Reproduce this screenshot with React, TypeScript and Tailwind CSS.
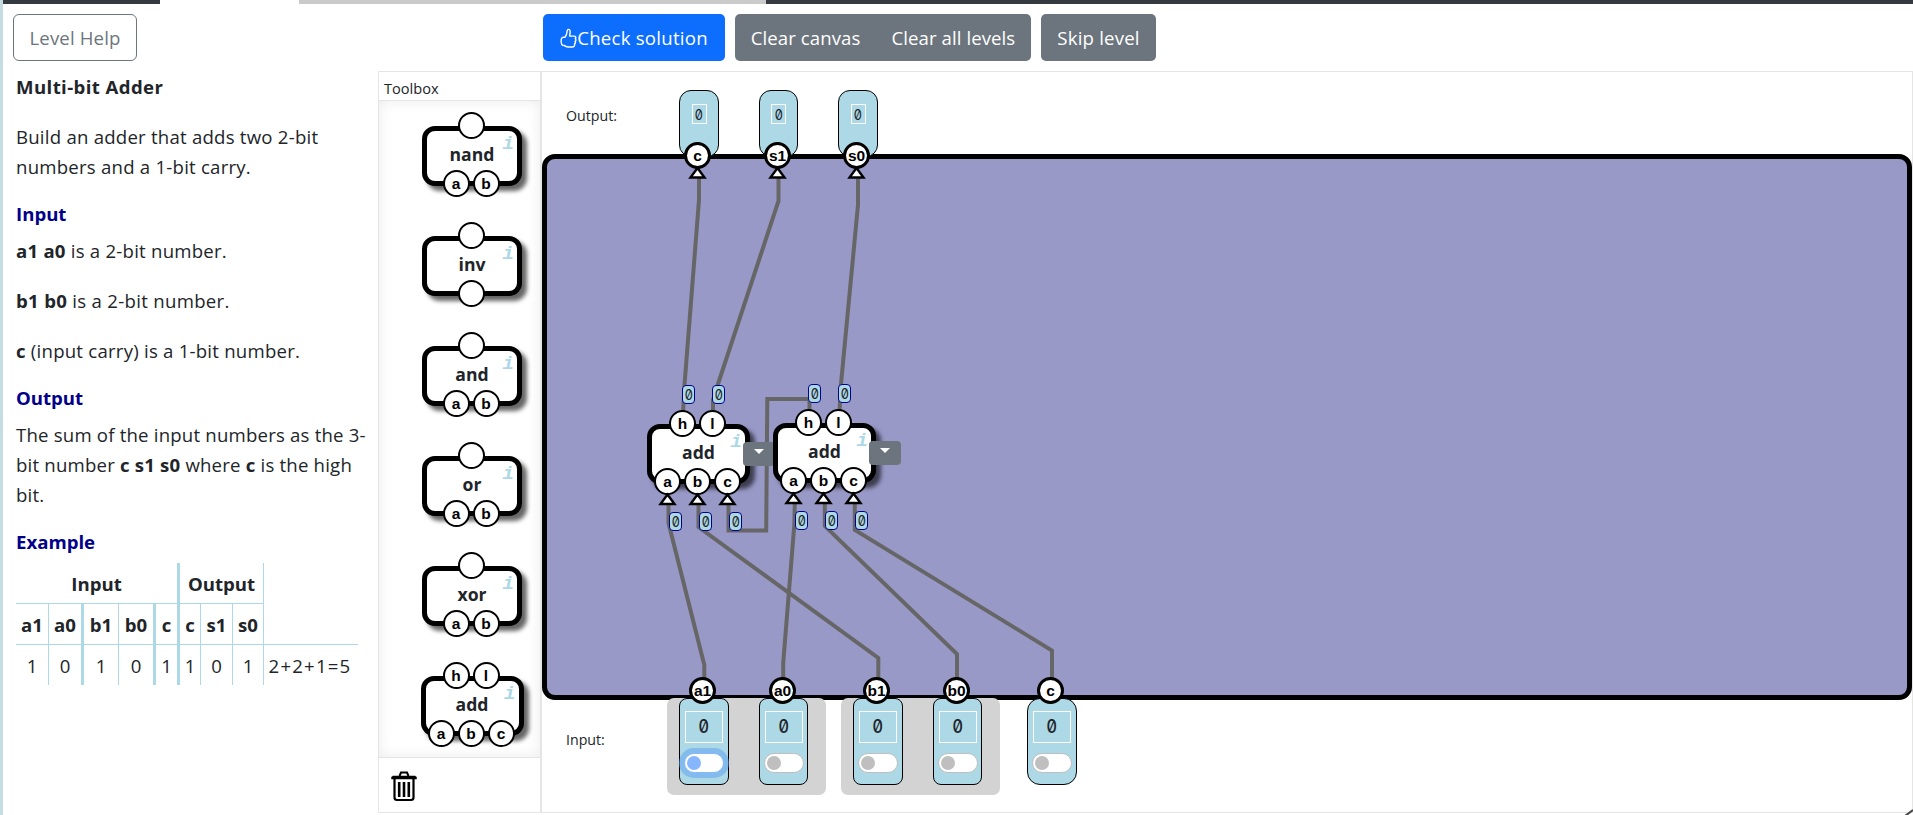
import type { ReactNode } from "react";

type Point = [number, number];

const ORIGIN_X = 541;
const ORIGIN_Y = 71;
const at = (x: number, y: number) => ({ left: x - ORIGIN_X, top: y - ORIGIN_Y });

const toolboxGates = [
  { name: "nand", top: [""], bottom: ["a", "b"] },
  { name: "inv", top: [""], bottom: [""] },
  { name: "and", top: [""], bottom: ["a", "b"] },
  { name: "or", top: [""], bottom: ["a", "b"] },
  { name: "xor", top: [""], bottom: ["a", "b"] },
  { name: "add", top: ["h", "l"], bottom: ["a", "b", "c"] },
];

const wires: Point[][] = [
  [[699, 176], [699, 200], [684.5, 385], [683, 413]],
  [[778.5, 176], [778.5, 201], [718, 384], [713, 400], [713, 413]],
  [[858, 176], [858, 205], [841, 384], [839.5, 411]],
  [[809.5, 412], [809.5, 399], [767.3, 399], [766.2, 530.5], [728.5, 530.5], [728.5, 504]],
  [[668.5, 504], [668.5, 523], [704.3, 665], [704.3, 680]],
  [[698.5, 504], [698.5, 527], [878.3, 658], [878.3, 680]],
  [[794.8, 503], [794.3, 525], [783.2, 663], [783.2, 680]],
  [[824.8, 503], [824.8, 526], [957, 654], [957, 680]],
  [[854.8, 503], [854.8, 530], [1052, 650.5], [1052, 680]],
];

const arrows: Point[] = [
  [697.5, 166.5], [777.5, 166.5], [856.5, 166.5],
  [667.5, 493], [697.5, 493], [727.5, 493],
  [793.5, 492], [823.5, 492], [853.5, 492],
];

const badges: Point[] = [
  [682, 385], [712, 385], [808, 384], [838, 384],
  [669, 512], [699, 512], [729, 512],
  [795, 511], [825, 511], [855, 511],
];

const outputs = [
  { name: "c", x: 679, w: 40, pin: 697.5 },
  { name: "s1", x: 759, w: 39, pin: 777.5 },
  { name: "s0", x: 838, w: 40, pin: 856.5 },
];

const inputs = [
  { name: "a1", x: 679, w: 50, pin: 702.5, focused: true, single: false },
  { name: "a0", x: 759, w: 49, pin: 782.5, focused: false, single: false },
  { name: "b1", x: 853, w: 50, pin: 876.5, focused: false, single: false },
  { name: "b0", x: 933, w: 49, pin: 956.5, focused: false, single: false },
  { name: "c", x: 1027, w: 50, pin: 1050.5, focused: false, single: true },
];

function Zero({ large = false }: { large?: boolean }) {
  return (
    <span
      className={`inline-block font-['Inter',sans-serif] leading-none text-[#212529] [font-feature-settings:'zero'] ${
        large ? "scale-x-[.9] text-[18px] font-medium" : "scale-x-[.86] text-[15px]"
      }`}
    >
      0
    </span>
  );
}

function Pin({ children, heavy = false }: { children?: ReactNode; heavy?: boolean }) {
  return (
    <span
      className={`flex size-[27px] shrink-0 items-center justify-center rounded-full border-black bg-white font-['Liberation_Sans',sans-serif] text-[15.5px] leading-none font-bold text-black ${
        heavy ? "border-[3px]" : "border-[2.5px]"
      }`}
    >
      {children}
    </span>
  );
}

function Gate({ name, top, bottom }: { name: string; top: string[]; bottom: string[] }) {
  return (
    <div
      className={`relative flex h-[60px] items-center justify-center rounded-[13px] border-[5px] border-black bg-white shadow-[5px_5px_4px_rgba(0,0,0,0.6)] ${
        bottom.length > 2 ? "w-[103px]" : "w-[100px]"
      }`}
    >
      <div className="absolute -top-[19px] right-0 left-0 flex justify-center gap-[3px] pr-[2px]">
        {top.map((p, i) => <Pin key={i}>{p}</Pin>)}
      </div>
      <span className="pb-[2px] text-[17.6px] leading-none font-bold text-[#212529]">{name}</span>
      <span className="absolute top-[4px] right-[3px] font-['Liberation_Mono',monospace] text-[19px] leading-none font-bold text-[#add8e6] italic">
        i
      </span>
      <div className="absolute top-[39px] -right-[5px] -left-[5px] flex justify-center gap-[3px] pr-[2px]">
        {bottom.map((p, i) => <Pin key={i}>{p}</Pin>)}
      </div>
    </div>
  );
}

function MenuButton() {
  return (
    <button className="flex h-6 w-8 items-center justify-center rounded-[4px] bg-[#6c757d] pb-[5px]">
      <svg width="10" height="5" viewBox="0 0 10 5"><path d="M0 0h10L5 5z" fill="#fff" /></svg>
    </button>
  );
}

function Toggle({ focused }: { focused: boolean }) {
  return (
    <span
      className={`flex h-5 w-10 items-center rounded-full border bg-white pl-[2px] ${
        focused ? "border-[#86b7fe] shadow-[0_0_0_5px_rgba(96,165,240,0.55)]" : "border-[#bfbfbf]"
      }`}
    >
      <span className={`size-[14px] rounded-full ${focused ? "bg-[#86b7fe]" : "bg-[#bfbfbf]"}`} />
    </span>
  );
}

function ThumbIcon() {
  return (
    <svg className="mt-[1px] h-[21px] w-[17px]" viewBox="0 0 17 21" fill="none" stroke="#fff" strokeWidth="1.4" strokeLinejoin="round">
      <path d="M4.8 9.4 C6.8 7.3 7 5.5 7.2 2.7 C7.3 1 9.8.8 10.1 3 C10.3 5 9.9 6.4 9.6 8.1 H14.3 C16 8.1 16.3 10 15.2 10.7 C16.3 11.3 16.1 13 15 13.4 C15.8 14.3 15.4 15.5 14.5 15.9 C15 17.3 14.3 18.9 12.7 19 H8 C6.3 19 5 18.2 3.9 17.4 H2.8 C.8 16.5.6 11 2 9.7 C2.8 9.1 3.8 9.2 4.8 9.4Z" />
    </svg>
  );
}

function TrashIcon() {
  return (
    <svg width="26" height="31" viewBox="0 0 26 31" fill="none" stroke="#000">
      <path d="M8.5 5 L10 1.5 H16 L17.5 5" strokeWidth="2" />
      <path d="M.5 8 V6.6 Q.5 5 2.5 5 H23.5 Q25.5 5 25.5 6.6 V8Z" fill="#000" strokeWidth=".5" />
      <path d="M3.5 8 V26.5 Q3.5 29 6 29 H20 Q22.5 29 22.5 26.5 V8" strokeWidth="2.2" />
      <path d="M8.2 11v15M13 11v15M17.8 11v15" strokeWidth="2.6" />
    </svg>
  );
}

const rowHead = [
  { t: "a1", b: "1", w: "w-[33px]", c: "border-r" },
  { t: "a0", b: "0", w: "w-[35px]", c: "border-r-[3px]" },
  { t: "b1", b: "1", w: "w-[35px]", c: "border-r" },
  { t: "b0", b: "0", w: "w-[37px]", c: "border-r-[3px]" },
  { t: "c", b: "1", w: "w-[24px]", c: "border-r-[3px]" },
  { t: "c", b: "1", w: "w-[21px]", c: "border-r" },
  { t: "s1", b: "0", w: "w-[32px]", c: "border-r" },
  { t: "s0", b: "1", w: "w-[31px]", c: "border-r" },
];

function LevelHelp() {
  return (
    <section className="w-[375px] shrink-0 pt-[1px] pl-[13px] text-[18.6px] leading-[30px] text-[#212529]">
      <h1 className="mb-5 font-bold tracking-[0.4px]">Multi-bit Adder</h1>
      <p className="mb-[17px] tracking-[0.23px] whitespace-nowrap">
        Build an adder that adds two 2-bit<br />numbers and a 1-bit carry.
      </p>
      <h2 className="mb-[7px] font-bold text-[#00008b]">Input</h2>
      <p className="mb-5 tracking-[0.23px]"><b>a1 a0</b> is a 2-bit number.</p>
      <p className="mb-5 tracking-[0.3px]"><b>b1 b0</b> is a 2-bit number.</p>
      <p className="mb-[17px] tracking-[0.23px]"><b>c</b> (input carry) is a 1-bit number.</p>
      <h2 className="mb-[7px] font-bold text-[#00008b]">Output</h2>
      <p className="mb-[17px] tracking-[0.2px] whitespace-nowrap">
        The sum of the input numbers as the 3-<br />bit number <b>c s1 s0</b> where <b>c</b> is the high<br />bit.
      </p>
      <h2 className="mb-[6px] font-bold text-[#00008b]">Example</h2>
      <table className="w-[342px] table-fixed border-separate border-spacing-0 text-center">
        <colgroup>
          {rowHead.map((r, i) => <col key={i} className={r.w} />)}
          <col className="w-[94px]" />
        </colgroup>
        <tbody>
          <tr className="h-[41px]">
            <th colSpan={5} className="border-r-[3px] border-b border-[#add8e6] p-0 pt-[2px]">Input</th>
            <th colSpan={3} className="border-r border-b border-[#add8e6] p-0 pt-[2px]">Output</th>
            <td />
          </tr>
          <tr className="h-[41px]">
            {rowHead.map((r, i) => <th key={i} className={`${r.c} border-b border-[#add8e6] p-0 pt-[2px]`}>{r.t}</th>)}
            <td className="border-b border-[#add8e6]" />
          </tr>
          <tr className="h-[40px]">
            {rowHead.map((r, i) => <td key={i} className={`${r.c} border-[#add8e6] p-0 pt-[2px]`}>{r.b}</td>)}
            <td className="p-0 pt-[2px] pr-[2px] tracking-[1.2px]">2+2+1=5</td>
          </tr>
        </tbody>
      </table>
    </section>
  );
}

function Toolbox() {
  return (
    <aside className="flex h-[742px] w-[163px] shrink-0 flex-col border border-[#e5e5e5]">
      <h2 className="h-[29px] border-b border-[#e5e5e5] pt-[1px] pl-[5px] text-[14.6px] leading-[31px] text-[#212529]">Toolbox</h2>
      <div className="flex flex-1 flex-col items-center gap-[50px] pt-[25px] pl-[25px] shadow-[inset_0_0_14px_rgba(0,0,0,0.08)] ">
        {toolboxGates.map((g) => <Gate key={g.name} {...g} />)}
      </div>
      <div className="flex h-[55px] items-center border-t border-[#e5e5e5] pt-[2px] pl-[12px]"><TrashIcon /></div>
    </aside>
  );
}

function Diagram() {
  return (
    <div className="absolute inset-0">
      <div className="absolute h-[97px] w-[159px] rounded-[7px] bg-[#d3d3d3]" style={at(667, 698)} />
      <div className="absolute h-[97px] w-[159px] rounded-[7px] bg-[#d3d3d3]" style={at(841, 698)} />
      {outputs.map((o) => (
        <div key={o.name} className="absolute flex h-[67px] justify-center rounded-[12px] border border-black bg-[#add8e6] pt-[13px]" style={{ ...at(o.x, 90), width: o.w }}>
          <span className="flex h-5 w-[15px] items-center justify-center border border-white"><Zero /></span>
        </div>
      ))}
      {inputs.map((n) => (
        <div
          key={n.name}
          className={`absolute flex h-[87px] flex-col items-center border border-black bg-[#add8e6] pt-[12px] ${n.single ? "rounded-[13px]" : "rounded-[8px]"}`}
          style={{ ...at(n.x, 698), width: n.w }}
        >
          <span className="mb-[10px] flex h-8 w-[38px] items-center justify-center border border-white"><Zero large /></span>
          <Toggle focused={n.focused} />
        </div>
      ))}
      <svg className="absolute inset-0" width="1372" height="744" viewBox="541 71 1372 744">
        {wires.map((w, i) => <polyline key={i} points={w.map((p) => p.join(",")).join(" ")} fill="none" stroke="#666" strokeWidth="4" />)}
      </svg>
      <div className="absolute" style={at(647, 424)}><Gate name="add" top={["h", "l"]} bottom={["a", "b", "c"]} /></div>
      <div className="absolute" style={at(743, 442)}><MenuButton /></div>
      <div className="absolute" style={at(773, 423)}><Gate name="add" top={["h", "l"]} bottom={["a", "b", "c"]} /></div>
      <div className="absolute" style={at(869, 441)}><MenuButton /></div>
      {outputs.map((o) => <div key={o.name} className="absolute" style={at(o.pin - 13.5, 142)}><Pin heavy>{o.name}</Pin></div>)}
      {inputs.map((n) => <div key={n.name} className="absolute" style={at(n.pin - 13.5, 677)}><Pin heavy>{n.name}</Pin></div>)}
      <svg className="absolute inset-0" width="1372" height="744" viewBox="541 71 1372 744">
        {arrows.map(([x, y], i) => (
          <path key={i} d={`M${x} ${y + 1.5}L${x + 7} ${y + 11}H${x - 7}Z`} fill="#fff" stroke="#000" strokeWidth="2.4" />
        ))}
        <path d="M1905 816l8-6" stroke="#444" strokeWidth="2" />
      </svg>
      {badges.map(([x, y]) => (
        <span key={`${x}-${y}`} className="absolute flex h-[19px] w-[13px] items-center justify-center rounded-[4px] border border-[#00008b] bg-[#add8e6]" style={at(x, y)}>
          <Zero />
        </span>
      ))}
    </div>
  );
}

function Canvas() {
  return (
    <main className="relative flex h-[742px] w-[1372px] flex-col border border-[#e5e5e5] text-[14.2px] text-[#212529]">
      <div className="flex h-[82px] items-center pt-[6px] pl-[24px]">Output:</div>
      <div className="h-[546px] w-[1370px] rounded-[13px] border-[5px] border-black bg-[#9999c8]" />
      <div className="flex flex-1 items-center pb-[33px] pl-[24px]">Input:</div>
      <div className="absolute -top-px -left-px h-[744px] w-[1372px]"><Diagram /></div>
    </main>
  );
}

export default function App() {
  return (
    <div className="flex h-[815px] w-[1913px] overflow-hidden bg-white font-['Open_Sans','Noto_Sans',sans-serif]">
      <div className="w-[3px] shrink-0 bg-[#c5dde2]" />
      <div className="flex flex-1 flex-col">
        <div className="flex h-1 shrink-0">
          <div className="w-[157px] bg-[#343a40]" />
          <div className="w-[139px]" />
          <div className="w-[467px] bg-[#cacaca]" />
          <div className="flex-1 bg-[#343a40]" />
        </div>
        <header className="flex h-[67px] shrink-0 pt-[10px] text-[18.6px] text-white">
          <div className="w-[540px] shrink-0 pl-[10px]">
            <button className="h-[47px] w-[124px] rounded-[6px] border border-[#6c757d] tracking-[0.15px] text-[#6c757d]">Level Help</button>
          </div>
          <button className="flex h-[47px] w-[182px] items-center justify-center rounded-[5px] bg-[#0d6efd] tracking-[0.25px]"><ThumbIcon />Check solution</button>
          <div className="ml-[10px] flex h-[47px] w-[296px] items-center justify-center gap-[31px] rounded-[5px] bg-[#6c757d] tracking-[0.08px]">
            <button>Clear canvas</button>
            <button>Clear all levels</button>
          </div>
          <button className="ml-[10px] h-[47px] w-[115px] rounded-[5px] bg-[#6c757d] tracking-[0.2px]">Skip level</button>
        </header>
        <div className="flex">
          <LevelHelp />
          <Toolbox />
          <Canvas />
        </div>
      </div>
    </div>
  );
}
